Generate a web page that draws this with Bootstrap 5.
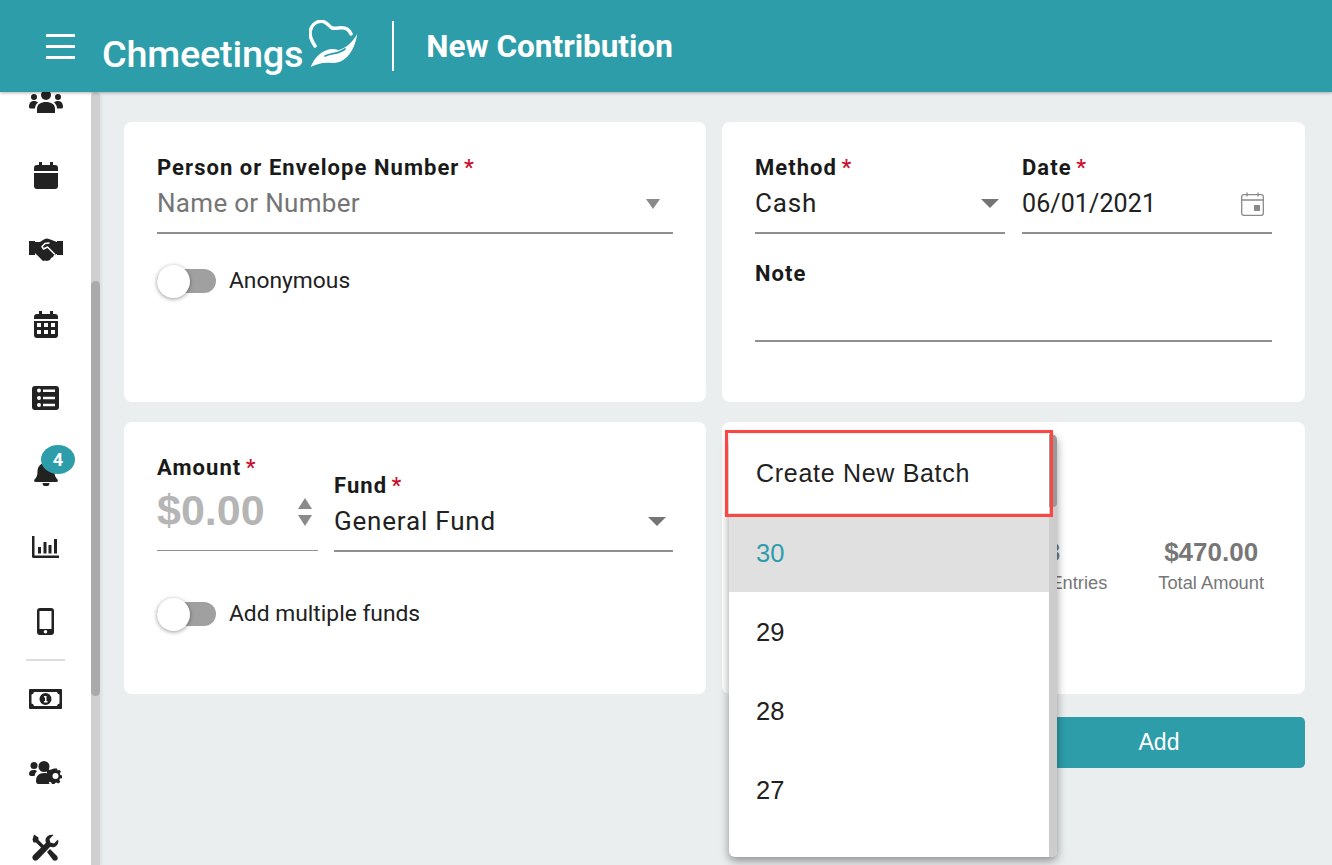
<!DOCTYPE html>
<html lang="en">
<head>
<meta charset="utf-8">
<title>New Contribution</title>
<link rel="stylesheet" href="https://cdn.jsdelivr.net/npm/bootstrap@5.3.0/dist/css/bootstrap.min.css">
<style>
html,body{height:865px;overflow:hidden}
body{font-family:Roboto,"Liberation Sans",sans-serif;background:#ebeeef;color:#212121}
.topbar{height:92px;background:#2d9daa;box-shadow:0 1px 3px rgba(0,0,0,.3);z-index:5;padding:0 0 0 46px}
.burger{width:29px;gap:8px}
.burger i{display:block;height:3px;background:#fff}
.logo-word{font-family:Roboto,sans-serif;font-weight:500;font-size:37.800px;color:#fff;margin:17px 6px 0 27px;line-height:1;letter-spacing:-.2px}
.logo-mark{width:50px;height:50px;margin-top:-2px}
.top-sep{width:2px;height:50px;background:#fff;margin:0 32px 0 33px}
.page-title{font-size:31.500px;font-weight:700;color:#fff;margin:2px 0 0}
.shell{height:773px}
.rail{width:91px;background:#fff;overflow:hidden;flex:none}
.rail-in{margin-top:-28px}
.rail-item{height:74.300px}
.rail-item svg{fill:#222}
.rail-rule{height:2px;background:#ddd;margin:1px 26px 0}
.bell-badge{position:absolute;left:41px;top:9.500px;width:34px;height:29px;border-radius:50%;background:#2d9daa;color:#fff;font-weight:700;font-size:18px;line-height:29px;text-align:center}
.rail-scroll{width:9px;background:#cfcfcf;flex:none;border-radius:5px 5px 0 0;padding-top:189px;box-shadow:2px 0 3px rgba(0,0,0,.06)}
.rail-thumb{height:415px;background:#aaa;border-radius:5px}
.work{padding:30px 27px 0 24px;min-width:0}
.sheet-grid{display:grid;grid-template-columns:582px 583px;grid-template-rows:280px 272px;column-gap:16px;row-gap:20px}
.sheet{border:0;border-radius:8px;padding:34px 33px 0;background:#fff}
.lbl{font-size:22px;font-weight:700;line-height:24px;letter-spacing:1.050px;color:#1a1a1a;white-space:nowrap}
.lbl b{color:#c8102e;font-weight:500;margin-left:-2px}
.val{height:54px;font-size:26px;padding-bottom:5px;letter-spacing:.8px;border-bottom:2px solid #8f8f8f;color:#212121;white-space:nowrap}
.val.hint{color:#757575;letter-spacing:.3px}
.val.digits{font-size:25px;letter-spacing:.1px}
.caret-dn{width:0;height:0;border-left:9px solid transparent;border-right:9px solid transparent;border-top:9px solid #757575}
.caret-dn.tiny{border-left-width:7px;border-right-width:7px;border-top-width:10px;border-top-color:#8a8a8a;margin-right:13px}
.caret-dn.mid{margin-right:6px}
.caret-dn.fund{margin-right:7px}
.caret-up{width:0;height:0;border-left:7.500px solid transparent;border-right:7.500px solid transparent;border-bottom:11px solid #8a8a8a}
.caret-dn.sm{border-left-width:7.500px;border-right-width:7.500px;border-top-width:11px;border-top-color:#8a8a8a}
.swt{margin-top:35px;gap:13px;font-size:22.800px;line-height:24px}
.swt.second{margin-top:50px}
.swt-track{width:59px;height:24px;border-radius:12px;background:#a0a0a0;position:relative;flex:none}
.swt-track::after{content:"";position:absolute;left:0;top:-4.500px;width:33px;height:33px;border-radius:50%;background:#fff;box-shadow:0 1px 4px rgba(0,0,0,.4)}
.col-half{width:250px}
.note-lbl{margin-top:28px}
.note-val{height:56px}
.amt{height:71px;font-family:"Liberation Sans",sans-serif;font-size:43px;font-weight:700;color:#b5b5b5;border-bottom:1.500px solid #8f8f8f;padding-bottom:10px}
.amt-col{width:161px}
.fund-col{width:339px;margin-top:18px}
.spin{gap:6px;margin-right:6px;margin-top:3px}
.stats{position:absolute;top:118px;right:41px;gap:51px;font-family:"Liberation Sans",sans-serif;color:#777;text-align:center}
.stats strong{display:block;font-size:26px;line-height:24px}
.stats span{display:block;font-size:18.300px;line-height:20px;margin-top:9px}
.add-btn{width:292px;height:51px;margin-top:23px;background:#2d9daa;color:#fff;border:0;border-radius:5px;font-family:"Liberation Sans",sans-serif;font-size:23px}
.add-btn:hover{background:#2d9daa;color:#fff}
.batch-menu{position:absolute;left:729px;top:434px;width:328px;height:423px;background:#fff;border-radius:6px;overflow:hidden;box-shadow:0 4px 10px rgba(0,0,0,.4);z-index:6;font-family:"Liberation Sans",sans-serif;font-size:25.500px;color:#212121}
.batch-list{flex:1}
.batch-row{height:79px;padding:1px 0 0 27px;border:0;border-radius:0;color:#212121}
.batch-row.wide{font-size:25px;letter-spacing:.7px}
.batch-row.on{background:#e0e0e0;color:#2d9daa}
.batch-scroll{width:8px;background:#ccc;flex:none}
.batch-thumb{height:73px;background:#999;border-radius:0 4px 4px 0}
.red-mark{position:absolute;left:725px;top:430px;width:328px;height:87px;border:3px solid #fb4646;z-index:7;pointer-events:none}
</style>
</head>
<body>
<nav class="navbar topbar position-relative flex-nowrap justify-content-start align-items-center">
  <div class="burger d-flex flex-column"><i></i><i></i><i></i></div>
  <span class="logo-word">Chmeetings</span>
  <svg class="logo-mark" viewBox="0 0 50 50" aria-hidden="true">
    <path d="M6 26C2 20 0 15 1.500 10 4 2 12-1 17 3c3 2 4 4 6 5 5 1 11-2 15 1 2 1 3 3 4 5" fill="none" stroke="#fff" stroke-width="3.500" stroke-linecap="round"/>
    <path d="M1.700 47C5 38 13 30 22 29c5-.5 6 1 8 1 7-2 14-8 18-16-1 13-10 30-25 29-9-1-15 1-21.300 4z" fill="#fff"/>
    <path d="M16 36c7-3 14-2 20-7" fill="none" stroke="#2d9daa" stroke-width="1.800" stroke-linecap="round"/>
  </svg>
  <div class="top-sep"></div>
  <h1 class="page-title">New Contribution</h1>
</nav>
<div class="shell d-flex">
  <aside class="rail">
    <div class="rail-in">
      <div class="rail-item d-flex align-items-center justify-content-center"><svg width="34" height="23" viewBox="0 0 34 23"><circle cx="17" cy="5" r="5"/><circle cx="5" cy="7" r="3"/><circle cx="29" cy="7" r="3"/><path d="M8 23v-4c0-5 4-7 9-7s9 2 9 7v4c-1 .8-2 1-3 1H11c-1 0-2-.2-3-1z"/><path d="M0 17c0-4 2-6 5-6 1.500 0 3 .5 4 1.500-2 1.500-3 3.500-3 6H2c-1 0-2-.5-2-1.500zM34 17c0-4-2-6-5-6-1.500 0-3 .5-4 1.500 2 1.500 3 3.500 3 6h4c1 0 2-.5 2-1.500z"/></svg></div>
      <div class="rail-item d-flex align-items-center justify-content-center"><svg width="24" height="27" viewBox="0 0 24 27"><path d="M5 0h3v3h8V0h3v3h2a3 3 0 0 1 3 3v3H0V6a3 3 0 0 1 3-3h2zM0 11h24v13a3 3 0 0 1-3 3H3a3 3 0 0 1-3-3z"/></svg></div>
      <div class="rail-item d-flex align-items-center justify-content-center"><svg width="34" height="23" viewBox="0 0 34 23"><path d="M0 3h6v14H0zM28 3h6v14h-6z"/><path d="M6 4h5l3-2c2-1.500 4-2 6-1l8 3v12l-3 1-1 2-2 1-1 2-3 1-2-.5-2 .5-3-3-5-5H6z"/><path d="M20 5l-4 .5-3 3 1.500 2.500 4-2 7 7" fill="none" stroke="#fff" stroke-width="1.500" stroke-linecap="round" stroke-linejoin="round"/></svg></div>
      <div class="rail-item d-flex align-items-center justify-content-center"><svg width="24" height="27" viewBox="0 0 24 27"><path fill-rule="evenodd" d="M5 0h3v3h8V0h3v3h2a3 3 0 0 1 3 3v2H0V6a3 3 0 0 1 3-3h2zM0 10h24v14a3 3 0 0 1-3 3H3a3 3 0 0 1-3-3zm3 2v4h4v-4zm7 0v4h4v-4zm7 0v4h4v-4zM3 19v4h4v-4zm7 0v4h4v-4zm7 0v4h4v-4z"/></svg></div>
      <div class="rail-item d-flex align-items-center justify-content-center"><svg width="27" height="24" viewBox="0 0 27 24"><path fill-rule="evenodd" d="M3 0h21a3 3 0 0 1 3 3v18a3 3 0 0 1-3 3H3a3 3 0 0 1-3-3V3a3 3 0 0 1 3-3zm2 4.500a2 2 0 1 0 4 0 2 2 0 0 0-4 0zm6-1v2.500h12V3.500zM5 12a2 2 0 1 0 4 0 2 2 0 0 0-4 0zm6-1.200v2.500h12v-2.500zM5 19a2 2 0 1 0 4 0 2 2 0 0 0-4 0zm6-1.200v2.500h12v-2.500z"/></svg></div>
      <div class="rail-item d-flex align-items-center justify-content-center position-relative"><svg width="24" height="26" viewBox="0 0 24 26"><path d="M12 0c1.200 0 2 .8 2 2v1c4 1 6.500 4 6.500 8.500 0 4 1 6 3 8 .8 1 .3 2.500-1 2.500H1.500c-1.300 0-1.800-1.500-1-2.500 2-2 3-4 3-8C3.500 7 6 4 10 3V2c0-1.200.8-2 2-2zM8.500 23h7a3.500 3.500 0 0 1-7 0z"/></svg><span class="bell-badge">4</span></div>
      <div class="rail-item d-flex align-items-center justify-content-center"><svg width="27" height="22" viewBox="0 0 27 22"><path d="M0 0h2.500v19.500H27V22H1.500A1.500 1.500 0 0 1 0 20.500zM6 11h3v6.500H6zM11.500 6h3v11.500h-3zM16.500 9h3v8.500h-3zM22 3h3v14.500h-3z"/></svg></div>
      <div class="rail-item d-flex align-items-center justify-content-center"><svg width="17" height="27" viewBox="0 0 17 27"><path fill-rule="evenodd" d="M3 0h11a3 3 0 0 1 3 3v21a3 3 0 0 1-3 3H3a3 3 0 0 1-3-3V3a3 3 0 0 1 3-3zm-.5 3v18h12V3zM8.500 22a1.800 1.800 0 1 0 0 3.600 1.800 1.800 0 0 0 0-3.600z"/></svg></div>
      <div class="rail-rule"></div>
      <div class="rail-item d-flex align-items-center justify-content-center"><svg width="33" height="20" viewBox="0 0 33 20"><path fill-rule="evenodd" d="M1 0h31a1 1 0 0 1 1 1v18a1 1 0 0 1-1 1H1a1 1 0 0 1-1-1V1a1 1 0 0 1 1-1zm4 3a3 3 0 0 1-2.500 2.500v9A3 3 0 0 1 5 17h23a3 3 0 0 1 2.500-2.500v-9A3 3 0 0 1 28 3zm11.500 1a6 6 0 1 1 0 12 6 6 0 0 1 0-12zm-1.500 3v1.500h1v3.500h-1v1.500h3.500V12h-1V7z"/></svg></div>
      <div class="rail-item d-flex align-items-center justify-content-center"><svg width="33" height="23" viewBox="0 0 33 23"><circle cx="5" cy="4.500" r="3.500"/><path d="M0 13c0-2.500 2-4 4.500-4 1.500 0 3 .5 3.500 1-1.500 1.500-2 3-2.500 5H2c-1 0-2-1-2-2z"/><circle cx="15" cy="5.500" r="5.500"/><path d="M7 20c0-5 3-8 8-8 2 0 3.500.5 4.500 1-1.500 2.500-1.500 5.500 0 8 .4.700.7 1.200 1 2H9c-1 0-2-1-2-3z"/><path fill-rule="evenodd" d="M25 9h3l.5 2 1.800-.8 1.700 2-1.200 1.600.6 1.700 2 .5v.1l-.4 2.700-2 .3-.7 1.500 1 1.800-2 1.600-1.800-1-1.500.6-.5 1.300h-2.500l-.6-2-1.600-.6-1.800 1-1.900-1.800 1-1.700-.6-1.600-2-.5v-2.600l2-.5.6-1.600-1-1.800 1.900-1.700 1.800 1zm1.500 4.500a3 3 0 1 0 0 6 3 3 0 0 0 0-6z" transform="translate(0 -1.500)"/></svg></div>
      <div class="rail-item d-flex align-items-center justify-content-center"><svg width="27" height="27" viewBox="0 0 27 27"><path d="M1.500 0 6 3v2.500l6 6-2.500 2.500-6-6H1L0 5z" transform="translate(.5 .500)"/><path d="M26 5.500c1 3-.5 6.500-3.500 7.500-1.500.5-3 .3-4.300-.2L6 25.500c-1.500 1.500-3.500 1.500-4.700.2-1.300-1.300-1.300-3.300.2-4.700L14 8.800c-.5-1.300-.7-2.800-.2-4.300C15 1.500 18.500 0 21.500 1l-4 4 .8 3.500 3.700.9z"/><path d="M15 18l3-3 7 7c1 1 1 3 0 4s-3 1-4 0z"/></svg></div>
    </div>
  </aside>
  <div class="rail-scroll"><div class="rail-thumb"></div></div>
  <main class="work flex-grow-1">
    <div class="sheet-grid">
      <section class="card sheet">
        <div class="lbl">Person or Envelope Number <b>*</b></div>
        <div class="val hint d-flex justify-content-between align-items-center">Name or Number <span class="caret-dn tiny"></span></div>
        <div class="swt d-flex align-items-center"><span class="swt-track"></span>Anonymous</div>
      </section>
      <section class="card sheet">
        <div class="d-flex justify-content-between">
          <div class="col-half">
            <div class="lbl">Method <b>*</b></div>
            <div class="val d-flex justify-content-between align-items-center">Cash <span class="caret-dn mid"></span></div>
          </div>
          <div class="col-half">
            <div class="lbl">Date <b>*</b></div>
            <div class="val digits d-flex justify-content-between align-items-center">06/01/2021
              <svg class="me-2" width="23" height="24" viewBox="0 0 23 24" fill="none" stroke="#8a8a8a" stroke-width="1.300"><rect x=".7" y="2.700" width="21.600" height="20.600" rx="2"/><path d="M1 8h21M6 .5v4M17 .5v4"/><rect x="13" y="13" width="6" height="6" fill="#8a8a8a" stroke="none"/></svg>
            </div>
          </div>
        </div>
        <div class="lbl note-lbl">Note</div>
        <div class="val note-val"></div>
      </section>
      <section class="card sheet">
        <div class="d-flex gap-3">
          <div class="amt-col">
            <div class="lbl">Amount <b>*</b></div>
            <div class="amt d-flex justify-content-between align-items-center">$0.00
              <div class="spin d-flex flex-column"><span class="caret-up"></span><span class="caret-dn sm"></span></div>
            </div>
          </div>
          <div class="fund-col">
            <div class="lbl">Fund <b>*</b></div>
            <div class="val d-flex justify-content-between align-items-center">General Fund <span class="caret-dn fund"></span></div>
          </div>
        </div>
        <div class="swt second d-flex align-items-center"><span class="swt-track"></span>Add multiple funds</div>
      </section>
      <section class="card sheet position-relative">
        <div class="stats d-flex">
          <div><strong>3</strong><span>Batch Entries</span></div>
          <div><strong>$470.00</strong><span>Total Amount</span></div>
        </div>
      </section>
    </div>
    <div class="d-flex justify-content-end"><button type="button" class="btn add-btn">Add</button></div>
  </main>
</div>
<div class="batch-menu d-flex">
  <div class="batch-list list-group list-group-flush">
    <div class="list-group-item batch-row wide d-flex align-items-center">Create New Batch</div>
    <div class="list-group-item batch-row on d-flex align-items-center">30</div>
    <div class="list-group-item batch-row d-flex align-items-center">29</div>
    <div class="list-group-item batch-row d-flex align-items-center">28</div>
    <div class="list-group-item batch-row d-flex align-items-center">27</div>
  </div>
  <div class="batch-scroll"><div class="batch-thumb"></div></div>
</div>
<div class="red-mark"></div>
</body>
</html>
